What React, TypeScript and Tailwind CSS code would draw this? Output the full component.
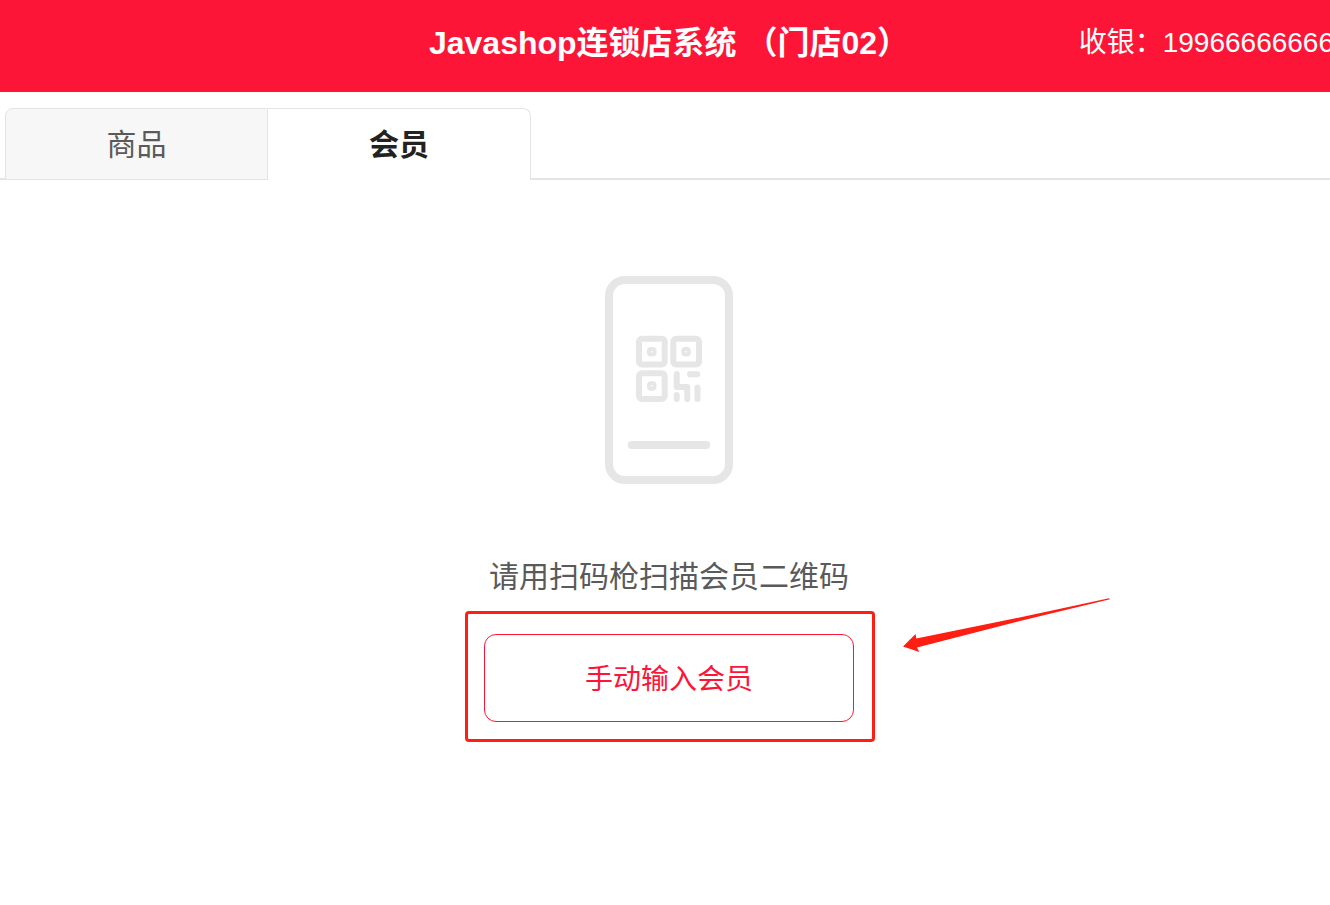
import { useState } from "react";

const TABS = [
  { id: "goods", label: "商品" },
  { id: "member", label: "会员" },
];

function Header() {
  return (
    <header className="grid h-[92px] grid-cols-[1fr_auto_1fr] items-center bg-[#fd1537] pb-1.5 whitespace-nowrap text-white">
      <h1 className="col-start-2 text-[32px] leading-10 font-bold">
        Javashop连锁店系统 （门店02）
      </h1>
      <p className="justify-self-end pr-1 text-[28px] leading-10">
        收银：19966666666
      </p>
    </header>
  );
}

type TabBarProps = {
  active: string;
  onChange: (id: string) => void;
};

function TabBar({ active, onChange }: TabBarProps) {
  return (
    <div
      role="tablist"
      className="mt-4 flex border-b-2 border-[#e4e4e4] pl-[5px]"
    >
      {TABS.map((tab) => (
        <button
          key={tab.id}
          type="button"
          role="tab"
          aria-selected={tab.id === active}
          onClick={() => onChange(tab.id)}
          className={`-mb-0.5 h-18 w-[263px] border-t border-r border-[#e4e4e4] text-[30px] first:rounded-tl-lg first:border-l last:rounded-tr-lg ${
            tab.id === active
              ? "bg-white font-bold text-[#222]"
              : "border-b bg-[#f7f7f7] text-[#5a5a5a]"
          }`}
        >
          {tab.label}
        </button>
      ))}
    </div>
  );
}

function PhoneQrIcon() {
  return (
    <svg
      width="128"
      height="208"
      viewBox="0 0 128 208"
      fill="none"
      stroke="#e6e6e6"
      strokeLinecap="round"
      aria-hidden="true"
    >
      <rect x="4" y="4" width="120" height="200" rx="16" strokeWidth="8" />
      <path d="M26.7 169H101.3" strokeWidth="8" />
      <g strokeWidth="6">
        <rect x="34" y="62.8" width="25.7" height="25.7" rx="3" />
        <rect x="68.3" y="62.8" width="25.7" height="25.7" rx="3" />
        <rect x="34" y="97.2" width="25.7" height="25.7" rx="3" />
        <path
          d="M71.7 98V111H82.2V123M71.7 119V123M85 98.3H92.3M92.5 111.5V123"
          strokeLinejoin="round"
        />
      </g>
      <g strokeWidth="4">
        <rect x="44" y="73" width="5.5" height="5.5" rx="2" />
        <rect x="78.3" y="73" width="5.5" height="5.5" rx="2" />
        <rect x="44" y="107.3" width="5.5" height="5.5" rx="2" />
      </g>
    </svg>
  );
}

// red frame and arrow that point the cashier to the manual entry button
function Highlight() {
  return (
    <div className="pointer-events-none absolute -top-[23px] -right-[21px] -bottom-5 -left-[19px] rounded-[4px] border-3 border-[#ff1e12]">
      <svg
        className="absolute -top-4 left-full ml-[31px]"
        width="208"
        height="56"
        viewBox="0 0 208 56"
        fill="#ff1e12"
        aria-hidden="true"
      >
        <path d="M0 48.5L12.5 36L13.3 40.5L120 18.8L206 0.3L207 1.2L120 22.2L14 49.5L16.3 54L0 48.5Z" />
      </svg>
    </div>
  );
}

function MemberPanel() {
  return (
    <main className="flex flex-col items-center pt-24">
      <PhoneQrIcon />
      <p className="mt-[73px] text-[30px] leading-10 text-[#5a5a5a]">
        请用扫码枪扫描会员二维码
      </p>
      <div className="relative mt-[37px]">
        <button
          type="button"
          className="h-22 w-[370px] rounded-xl border border-[#fd1537] pt-1 text-[28px] text-[#fd1537]"
        >
          手动输入会员
        </button>
        <Highlight />
      </div>
    </main>
  );
}

export default function App() {
  const [active, setActive] = useState("member");

  return (
    <div className="min-h-screen overflow-hidden bg-white font-['Liberation_Sans','Noto_Sans_CJK_SC',sans-serif]">
      <div className="-mr-2">
        <Header />
        <TabBar active={active} onChange={setActive} />
        <MemberPanel />
      </div>
    </div>
  );
}
